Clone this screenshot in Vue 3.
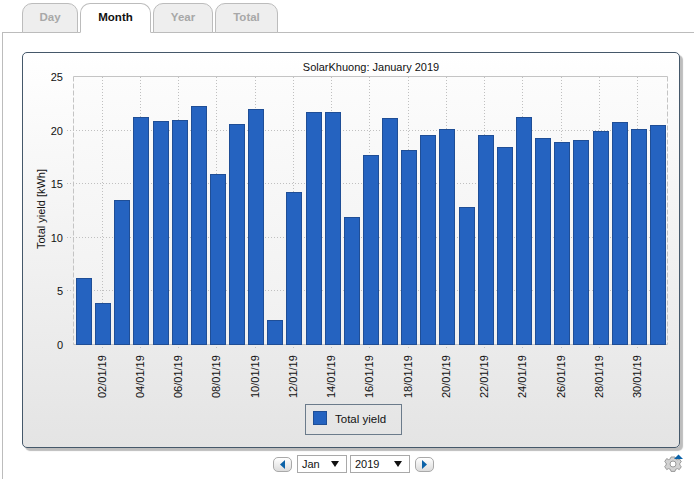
<script setup>
const values = [6.2, 3.8, 13.4, 21.2, 20.8, 20.9, 22.2, 15.9, 20.5, 21.9, 2.2, 14.2, 21.6, 21.6, 11.85, 17.65, 21.1, 18.1, 19.5, 20.1, 12.8, 19.5, 18.4, 21.2, 19.2, 18.8, 19.0, 19.9, 20.7, 20.1, 20.4]
const y0 = 344
const unit = 10.72
const bars = values.map((v, i) => {
  const cx = 83.5 + i * 19.13
  const top = Math.round(y0 - v * unit)
  return { x: Math.round(cx - 7.5) + 0.5, y: top + 0.5, h: y0 - top }
})
const dates = []
for (let d = 2; d <= 30; d += 2) {
  const cx = Math.round(83.5 + (d - 1) * 19.13) - 0.5
  dates.push({ x: cx, label: String(d).padStart(2, '0') + '/01/19' })
}
const yTicks = [0, 5, 10, 15, 20, 25].map(v => ({ v, y: Math.round(y0 - v * unit) + 0.5 }))
const tabs = [
  { label: 'Day', active: false, w: 56 },
  { label: 'Month', active: true, w: 71 },
  { label: 'Year', active: false, w: 60 },
  { label: 'Total', active: false, w: 63 }
]
</script>

<template>
  <div class="page">
    <div class="tabs">
      <div v-for="t in tabs" :key="t.label" class="tab" :class="{ active: t.active }" :style="{ width: t.w + 'px' }">{{ t.label }}</div>
    </div>
    <div class="content">
      <div class="panel">
        <svg class="chart" viewBox="24 54 654 392" width="654" height="392">
          <defs>
            <linearGradient id="plotbg" x1="0" y1="0" x2="0" y2="1">
              <stop offset="0" stop-color="#fcfcfc" />
              <stop offset="1" stop-color="#f0f0f0" />
            </linearGradient>
          </defs>
          <text x="371" y="71" text-anchor="middle" class="label">SolarKhuong: January 2019</text>
          <rect x="73.5" y="76.5" width="594" height="268" fill="url(#plotbg)" />
          <line x1="73.5" y1="76.5" x2="667.5" y2="76.5" stroke="#c4c4c4" />
          <line x1="73.5" y1="76.5" x2="73.5" y2="344.5" stroke="#c4c4c4" stroke-dasharray="5 2" />
          <line x1="667.5" y1="76.5" x2="667.5" y2="344.5" stroke="#c4c4c4" stroke-dasharray="5 2" />
          <line x1="73.5" y1="344.5" x2="667.5" y2="344.5" stroke="#c4c4c4" />
          <line v-for="d in dates" :key="'g' + d.x" :x1="d.x" y1="77" :x2="d.x" y2="350" stroke="#c0c0c0" stroke-dasharray="1 2" />
          <line v-for="t in yTicks.slice(1, 5)" :key="'h' + t.v" x1="67" :y1="t.y" x2="667" :y2="t.y" stroke="#c0c0c0" stroke-dasharray="1 2" />
          <rect v-for="(b, i) in bars" :key="i" :x="b.x" :y="b.y" width="15" :height="b.h" fill="#2563c0" stroke="#1f4e96" />
          <text v-for="t in yTicks" :key="'y' + t.v" x="63" :y="t.y + 4" text-anchor="end" class="label">{{ t.v }}</text>
          <text transform="translate(45 209) rotate(-90)" text-anchor="middle" class="label">Total yield [kWh]</text>
          <text v-for="d in dates" :key="d.label" :transform="`translate(${d.x + 3} 398) rotate(-90)`" class="label">{{ d.label }}</text>
          <rect x="305.5" y="404.5" width="96" height="30" fill="none" stroke="#6b7b8b" />
          <rect x="313.5" y="411.5" width="13" height="13" fill="#2563c0" stroke="#1f4e96" />
          <text x="335" y="423" class="label legend-text">Total yield</text>
        </svg>
      </div>
      <div class="controls">
        <button class="nav">
          <svg width="7" height="9" viewBox="0 0 7 9"><path d="M6 0v9L1 4.500z" fill="#0b62a8" /></svg>
        </button>
        <div class="select month"><span>Jan</span><i class="caret"></i></div>
        <div class="select year"><span>2019</span><i class="caret"></i></div>
        <button class="nav">
          <svg width="7" height="9" viewBox="0 0 7 9"><path d="M1 0v9l5-4.500z" fill="#0b62a8" /></svg>
        </button>
      </div>
      <svg class="gear" width="20" height="20" viewBox="0 0 20 20">
        <path d="M7 3h4l.6 2 1.900.800 1.800-1 2 3-1.500 1.400v2l1.500 1.400-2 3-1.800-1-1.900.800-.6 2H7l-.6-2-1.900-.800-1.800 1-2-3L2.200 11V9L.700 7.600l2-3 1.800 1 1.900-.800z" fill="#d2d2d2" stroke="#9a9a9a" />
        <circle cx="9" cy="10" r="3" fill="#fff" stroke="#9a9a9a" />
        <path d="M10 5l4.500-4.500L19 5z" fill="#0b62a8" />
      </svg>
    </div>
  </div>
</template>

<style scoped>
.page {
  width: 694px;
  height: 480px;
  overflow: hidden;
  font-family: "Liberation Sans", sans-serif;
  background: #fff;
  box-sizing: border-box;
  padding: 3px 0 0 2px;
}
.tabs {
  display: flex;
  gap: 2px;
  padding-left: 20px;
  height: 30px;
  position: relative;
  z-index: 1;
}
.tab {
  box-sizing: border-box;
  height: 30px;
  border: 1px solid #bcbcbc;
  border-radius: 10px 10px 0 0;
  background: #eeeeee;
  color: #a8a8a8;
  font-size: 11.500px;
  font-weight: bold;
  text-align: center;
  line-height: 26px;
}
.tab.active {
  background: #fff;
  color: #111;
  border-bottom-color: #fff;
}
.content {
  position: relative;
  height: 447px;
  box-sizing: border-box;
  border-top: 1px solid #bcbcbc;
  border-left: 1px solid #bcbcbc;
  margin-top: -1px;
  padding: 19px 0 0 19px;
}
.panel {
  width: 658px;
  height: 396px;
  box-sizing: border-box;
  border: 1px solid #45586a;
  padding: 1px;
  border-radius: 5px;
  background: linear-gradient(#ffffff, #e4e4e4);
  box-shadow: 3px 3px 1px #bdbdbd;
}
.chart {
  display: block;
}
.label {
  font-family: "Liberation Sans", sans-serif;
  font-size: 11px;
  fill: #111;
}
.legend-text {
  font-size: 11.500px;
}
.controls {
  display: flex;
  align-items: center;
  gap: 3px;
  margin: 7px 0 0 251px;
  height: 18px;
}
.nav {
  box-sizing: border-box;
  width: 19px;
  height: 15px;
  padding: 0;
  border: 1px solid #a9a9a9;
  border-radius: 5px;
  background: linear-gradient(#ffffff, #dcdcdc);
  display: flex;
  align-items: center;
  justify-content: center;
}
.nav:first-child { margin-right: 2px; }
.nav:last-child { margin-left: 2px; }
.select {
  box-sizing: border-box;
  height: 18px;
  border: 1px solid #a9a9a9;
  background: #fff;
  display: flex;
  align-items: center;
  justify-content: space-between;
  padding: 0 7px 0 4px;
  font-size: 11px;
  color: #111;
}
.select.month { width: 50px; }
.select.year { width: 60px; }
.caret {
  width: 0;
  height: 0;
  border-left: 4px solid transparent;
  border-right: 4px solid transparent;
  border-top: 6px solid #111;
}
.gear {
  position: absolute;
  left: 661px;
  top: 421px;
}
</style>
